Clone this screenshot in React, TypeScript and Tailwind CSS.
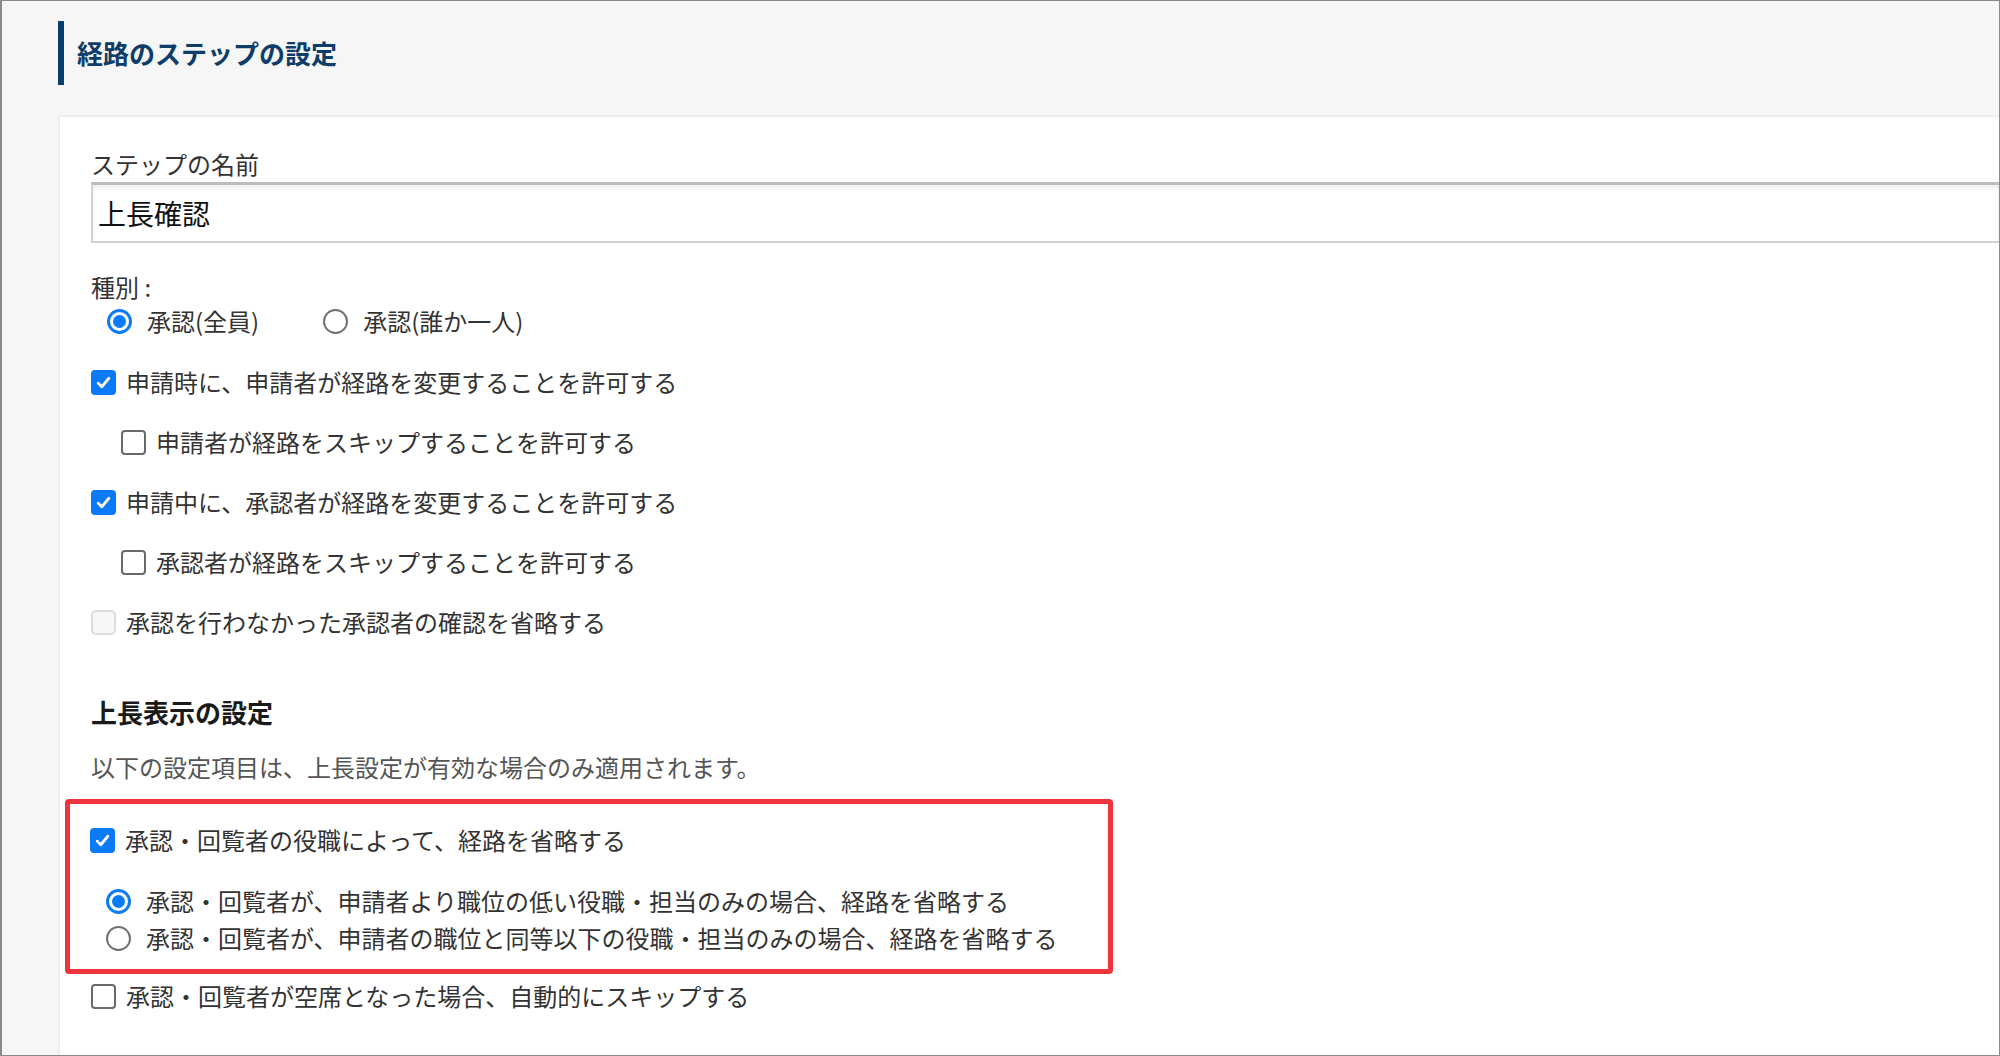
import React from "react";

function Check(props: { checked?: boolean; disabled?: boolean }) {
	if (props.disabled) {
		return <span className="block w-[25px] h-[25px] shrink-0 rounded-[5px] border-2 border-[#dcdcdc] bg-[#f7f7f7]" />;
	}
	if (props.checked) {
		return (
			<span className="flex w-[25px] h-[25px] shrink-0 items-center justify-center rounded-[4px] bg-[#0b7bf5]">
				<svg width="17" height="17" viewBox="0 0 16 16">
					<path d="M3 8.6 L6.4 12 L13 4" fill="none" stroke="white" strokeWidth="2.6" strokeLinecap="round" strokeLinejoin="round" />
				</svg>
			</span>
		);
	}
	return <span className="block w-[25px] h-[25px] shrink-0 rounded-[4px] border-2 border-[#6a6a6a] bg-white" />;
}

function Radio(props: { checked?: boolean }) {
	return props.checked ? (
		<span className="flex w-[25px] h-[25px] shrink-0 items-center justify-center rounded-full border-[3px] border-[#0b7bf5] bg-white">
			<span className="block w-[13px] h-[13px] rounded-full bg-[#0b7bf5]" />
		</span>
	) : (
		<span className="block w-[25px] h-[25px] shrink-0 rounded-full border-2 border-[#707070] bg-white" />
	);
}

function CheckRow(props: { label: string; checked?: boolean; disabled?: boolean; indent?: boolean }) {
	return (
		<div className={"flex items-center gap-[10px] h-[32px] " + (props.indent ? "ml-[30px]" : "")}>
			<Check checked={props.checked} disabled={props.disabled} />
			<span>{props.label}</span>
		</div>
	);
}

function RadioRow(props: { label: string; checked?: boolean }) {
	return (
		<div className="flex items-center gap-[15px] h-[32px]">
			<Radio checked={props.checked} />
			<span>{props.label}</span>
		</div>
	);
}

export default function App() {
	return (
		<div className="w-[2000px] h-[1056px] overflow-hidden border border-l-2 border-[#8a8a8a] bg-[#f6f6f6] flex flex-col font-['Noto_Sans_CJK_JP','Noto_Sans',sans-serif] text-[24px] leading-[32px] text-[#333]">
			<div className="h-[114px] shrink-0 pt-[20px] pl-[56px]">
				<div className="flex items-center h-[64px]">
					<div className="w-[6px] h-[64px] bg-[#063f6e]" />
					<h1 className="pl-[13px] text-[26px] font-bold text-[#0d3d68]">経路のステップの設定</h1>
				</div>
			</div>

			<div className="ml-[56px] flex-1 bg-white border-l-2 border-t-2 border-[#eeeeee] pt-[31px] pl-[31px]">
				<div>ステップの名前</div>
				<div className="mt-[2px] h-[61px] flex items-center pl-[5px] border-2 border-r-0 border-[#d2d2d2] border-t-[3px] border-t-[#bdbdbd] shadow-[inset_0_3px_4px_rgba(0,0,0,0.07)] text-[28px] text-[#111]">
					上長確認
				</div>

				<div className="mt-[28px]">種別 :</div>
				<div className="mt-[2px] flex items-center ml-[16px]">
					<RadioRow label="承認(全員)" checked />
					<div className="ml-[64px]">
						<RadioRow label="承認(誰か一人)" />
					</div>
				</div>

				<div className="mt-[29px] flex flex-col gap-[28px]">
					<CheckRow label="申請時に、申請者が経路を変更することを許可する" checked />
					<CheckRow label="申請者が経路をスキップすることを許可する" indent />
					<CheckRow label="申請中に、承認者が経路を変更することを許可する" checked />
					<CheckRow label="承認者が経路をスキップすることを許可する" indent />
					<CheckRow label="承認を行わなかった承認者の確認を省略する" disabled />
				</div>

				<h2 className="mt-[58px] text-[26px] font-bold text-[#1a1a1a]">上長表示の設定</h2>
				<p className="mt-[23px] text-[#555]">以下の設定項目は、上長設定が有効な場合のみ適用されます。</p>

				<div className="mt-[16px] -ml-[26px] w-[1048px] border-[5px] border-[#f0343b] rounded-[4px] pt-[20px] pb-[15px] pl-[20px]">
					<CheckRow label="承認・回覧者の役職によって、経路を省略する" checked />
					<div className="mt-[29px] ml-[16px] flex flex-col gap-[5px]">
						<RadioRow label="承認・回覧者が、申請者より職位の低い役職・担当のみの場合、経路を省略する" checked />
						<RadioRow label="承認・回覧者が、申請者の職位と同等以下の役職・担当のみの場合、経路を省略する" />
					</div>
				</div>

				<div className="mt-[6px]">
					<CheckRow label="承認・回覧者が空席となった場合、自動的にスキップする" />
				</div>
			</div>
		</div>
	);
}
